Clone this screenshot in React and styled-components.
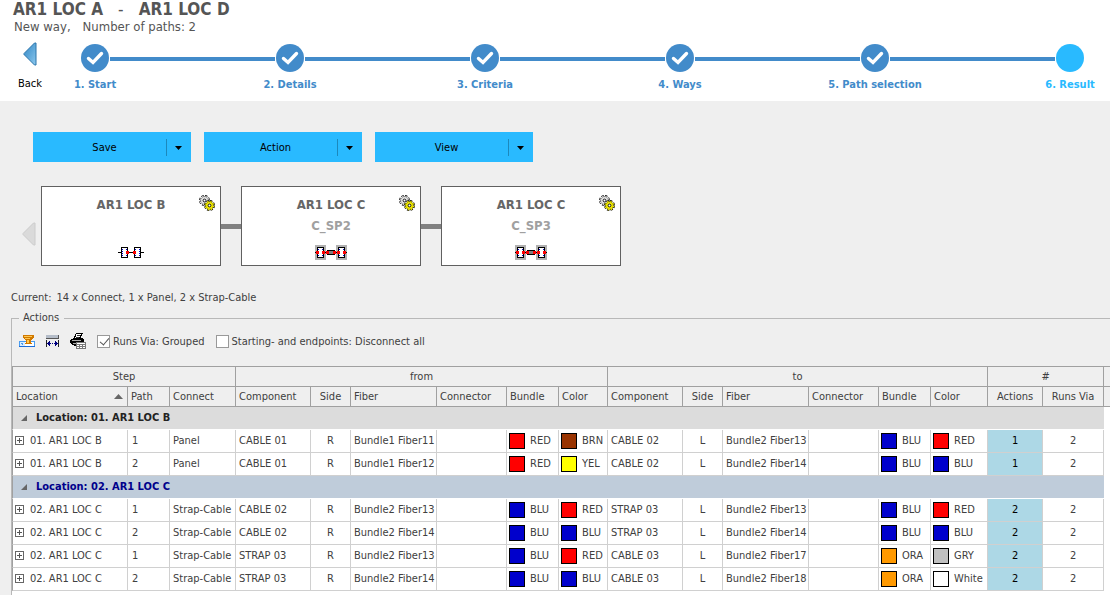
import {useState} from "react";
import styled, {createGlobalStyle} from "styled-components";

const COLOR = {
  BLUE: "#428bca",
  CYAN: "#29baff",
  PAGE: "#efefef",
  TEXT: "#404040",
  GRID_DARK: "#a0a0a0",
  GRID_LIGHT: "#d0d0d0",
};

const SWATCH = {
  RED: "#ff0000",
  BRN: "#993300",
  YEL: "#ffff00",
  BLU: "#0000cc",
  ORA: "#ff9900",
  GRY: "#c0c0c0",
  White: "#ffffff",
};

const STEPS = ["1. Start", "2. Details", "3. Criteria", "4. Ways", "5. Path selection", "6. Result"];

const NODES = [
  {title: "AR1 LOC B"},
  {title: "AR1 LOC C", splice: "C_SP2"},
  {title: "AR1 LOC C", splice: "C_SP3"},
];

const COLUMN_WIDTHS = [116, 42, 66, 75, 40, 86, 70, 52, 49, 75, 40, 86, 70, 52, 57, 55, 61];

const END_COLUMNS = ["Component", "Side", "Fiber", "Connector", "Bundle", "Color"];

const GROUPS = [
  {
    name: "Location: 01. AR1 LOC B",
    rows: [
      ["01. AR1 LOC B", 1, "Panel", ["CABLE 01", "R", "Bundle1 Fiber11", "RED", "BRN"], ["CABLE 02", "L", "Bundle2 Fiber13", "BLU", "RED"], 1, 2],
      ["01. AR1 LOC B", 2, "Panel", ["CABLE 01", "R", "Bundle1 Fiber12", "RED", "YEL"], ["CABLE 02", "L", "Bundle2 Fiber14", "BLU", "BLU"], 1, 2],
    ],
  },
  {
    name: "Location: 02. AR1 LOC C",
    selected: true,
    rows: [
      ["02. AR1 LOC C", 1, "Strap-Cable", ["CABLE 02", "R", "Bundle2 Fiber13", "BLU", "RED"], ["STRAP 03", "L", "Bundle2 Fiber13", "BLU", "RED"], 2, 2],
      ["02. AR1 LOC C", 2, "Strap-Cable", ["CABLE 02", "R", "Bundle2 Fiber14", "BLU", "BLU"], ["STRAP 03", "L", "Bundle2 Fiber14", "BLU", "BLU"], 2, 2],
      ["02. AR1 LOC C", 1, "Strap-Cable", ["STRAP 03", "R", "Bundle2 Fiber13", "BLU", "RED"], ["CABLE 03", "L", "Bundle2 Fiber17", "ORA", "GRY"], 2, 2],
      ["02. AR1 LOC C", 2, "Strap-Cable", ["STRAP 03", "R", "Bundle2 Fiber14", "BLU", "BLU"], ["CABLE 03", "L", "Bundle2 Fiber18", "ORA", "White"], 2, 2],
    ],
  },
];

const CheckIcon = () => (
  <svg width="28" height="28" viewBox="0 0 28 28" aria-hidden="true">
    <path d="M7.500 14.500l4.500 4 8.500-9" fill="none" stroke="#fff" strokeWidth="3.4" strokeLinecap="round" />
  </svg>
);

const BackIcon = () => (
  <svg width="14" height="24" viewBox="0 0 14 24" aria-hidden="true">
    <defs>
      <linearGradient id="back" x1="0" y1="0" x2="1" y2="1">
        <stop offset="0" stopColor="#2f86c4" />
        <stop offset="1" stopColor="#8cc8ee" />
      </linearGradient>
    </defs>
    <path d="M11.500 1h1.500v22h-1.500L1 12.500v-1z" fill="url(#back)" stroke="#2b74ab" strokeLinejoin="round" />
  </svg>
);

const ScrollIcon = () => (
  <svg width="14" height="24" viewBox="0 0 14 24" aria-hidden="true">
    <path d="M11.500 1h1.500v22h-1.500L1 12.500v-1z" fill="#dadada" stroke="#cccccc" strokeLinejoin="round" />
  </svg>
);

const CaretIcon = () => (
  <svg width="7" height="4" viewBox="0 0 7 4" aria-hidden="true">
    <path d="M0 0h7L3.500 4z" fill="#000" />
  </svg>
);

const Gear = ({x, y, fill}) => (
  <g transform={`translate(${x} ${y})`}>
    <circle r="4.2" fill="none" stroke="#000" strokeWidth="2.6" strokeDasharray="2.1 1.2" />
    <circle r="3.900" fill={fill} stroke="#000" strokeWidth="0.6" strokeDasharray="1.2 1" />
    <circle r="4.2" fill="none" stroke={fill} strokeWidth="1.6" strokeDasharray="1.1 2.2" strokeDashoffset="-0.5" />
    <circle r="1.4" fill="#fff" stroke="#000" strokeWidth="0.9" />
  </g>
);

const GearsIcon = () => (
  <svg width="16" height="16" viewBox="0 0 16 16" aria-hidden="true">
    <Gear x={5.5} y={5.5} fill="#e0e0e0" />
    <Gear x={10.5} y={10.5} fill="#f0e800" />
  </svg>
);

const Port = ({x, y}) => (
  <g>
    <rect x={x} y={y} width="7" height="11" fill="#000" />
    <rect x={x + 1} y={y + 1} width="5" height="9" fill="#fff" />
    {[2, 4, 6, 8].map((dy) => (
      <path key={dy} d={`M${x + 1} ${y + dy}h1v1h-1zM${x + 5} ${y + dy}h1v1h-1z`} fill="#0000cc" />
    ))}
  </g>
);

const PanelIcon = () => (
  <svg width="26" height="15" viewBox="0 0 26 15" shapeRendering="crispEdges" aria-hidden="true">
    <path d="M0 7h3v1H0zM10 7h6v1h-6zM23 7h3v1h-3z" fill="#000" />
    <Port x={3} y={2} />
    <Port x={16} y={2} />
    <path d="M8 6h3v3H8zM15 6h3v3h-3z" fill="#f00" />
  </svg>
);

const StrapIcon = () => (
  <svg width="32" height="15" viewBox="0 0 32 15" shapeRendering="crispEdges" aria-hidden="true">
    <path d="M0 0h11v15H0zM21 0h11v15H21z" fill="#b0b0b0" />
    <path d="M0 7h32v1H0zM12 5h8v5h-8z" fill="#000" />
    <path d="M13 6h6v3h-6z" fill="#808080" />
    <Port x={2} y={2} />
    <Port x={23} y={2} />
    <path d="M1 6h3v3H1zM7 6h3v3H7zM11 6h3v3h-3zM18 6h3v3h-3zM22 6h3v3h-3zM28 6h3v3h-3z" fill="#f00" />
  </svg>
);

const FilterIcon = () => (
  <svg width="16" height="16" viewBox="0 0 16 16" shapeRendering="crispEdges" aria-hidden="true">
    <path d="M0 7h16v6H0z" fill="#4a9cf0" />
    <path d="M1 8h5v4H1z" fill="#d8ecff" />
    <path d="M6 8h9v4H6z" fill="#fff" />
    <path d="M2 9h2v1H2zM3 10h1v1H3z" fill="#4a9cf0" />
    <path d="M0 12h16v1H0z" fill="#1c6cd8" />
    <path d="M4 1h11v3h-1v1h-1v1h-1v3h1v1H6V9h1V6H6V5H5V4H4z" fill="#d07800" />
    <path d="M5 2h8v1H5zM6 4h5v1H6zM8 6h2v3H8z" fill="#ffc850" />
  </svg>
);

const WidthIcon = () => (
  <svg width="13" height="16" viewBox="0 0 13 16" shapeRendering="crispEdges" aria-hidden="true">
    <path d="M0 1h13v4H0z" fill="#555" />
    <path d="M0 1h12v3H0z" fill="#b4bcc8" />
    <path d="M0 6h1v7H0zM12 6h1v7h-1z" fill="#222" />
    <path d="M1 9h1V8h1V7h1v2h1v1H4v2H3v-1H2v-1H1zM6 9h1v1H6zM12 9h-1V8h-1V7H9v2H8v1h1v2h1v-1h1v-1h1z" fill="#000080" />
  </svg>
);

const PrintIcon = () => (
  <svg width="16" height="17" viewBox="0 0 16 17" shapeRendering="crispEdges" aria-hidden="true">
    <path d="M6 0h7v1h-1v2h-1v2h2v1h1v5h-1v1h-1v1H4v-1H2v-1H1V10H0V7h1V6h2V5h1V3h1V1h1z" fill="#000" />
    <path d="M6 1h5v1h-1v2H9v1H5V4h1z" fill="#fff" />
    <path d="M7 2h3v1H7zM6 4h3v1H6z" fill="#333" />
    <path d="M2 7h9v1H2zM3 10h4v1H3z" fill="#aaa" />
    <path d="M6 9h10v7H6z" fill="#777" />
    <path d="M7 10h8v1H7zM7 12h2v1H7zM10 12h2v1h-2zM13 12h2v1h-2zM7 14h2v1H7zM10 14h2v1h-2zM13 14h2v1h-2z" fill="#fff" />
  </svg>
);

const SortIcon = () => (
  <svg width="9" height="5" viewBox="0 0 9 5" aria-hidden="true">
    <path d="M0 5h9L4.500 0z" fill="#666" />
  </svg>
);

const GroupIcon = () => (
  <svg width="6" height="6" viewBox="0 0 6 6" aria-hidden="true">
    <path d="M6 0v6H0z" fill="#666" />
  </svg>
);

const PlusIcon = () => (
  <svg width="9" height="10" viewBox="0 0 9 10" shapeRendering="crispEdges" aria-hidden="true">
    <path d="M0 0h9v9H0z" fill="#666" />
    <path d="M1 1h7v7H1z" fill="#fff" />
    <path d="M2 4h5v1H2zM4 2h1v5H4z" fill="#555" />
  </svg>
);

const SplitButton = ({label}) => (
  <StyledSplit>
    <StyledSplitMain type="button">{label}</StyledSplitMain>
    <StyledSplitCaret type="button" aria-label={`${label} options`}><CaretIcon /></StyledSplitCaret>
  </StyledSplit>
);

const Check = ({label, defaultChecked}) => {
  const [checked, setChecked] = useState(Boolean(defaultChecked));

  return (
    <StyledCheckLabel>
      <StyledCheckbox type="checkbox" checked={checked} onChange={() => setChecked(!checked)} />
      {label}
    </StyledCheckLabel>
  );
};

const ColorCell = ({code}) => (
  <StyledCell>
    <StyledColor><StyledSwatch $color={SWATCH[code]} />{code}</StyledColor>
  </StyledCell>
);

const EndCells = ({end: [component, side, fiber, bundle, color]}) => (
  <>
    <StyledCell>{component}</StyledCell>
    <StyledCell $center>{side}</StyledCell>
    <StyledCell>{fiber}</StyledCell>
    <StyledCell />
    <ColorCell code={bundle} />
    <ColorCell code={color} />
  </>
);

const Group = ({name, selected, rows}) => {
  const [isOpen, setOpen] = useState(true);

  return (
    <tbody>
      <tr>
        <StyledGroupCell colSpan={17} $selected={selected}>
          <StyledGroupButton type="button" aria-expanded={isOpen} onClick={() => setOpen(!isOpen)}>
            <GroupIcon />{name}
          </StyledGroupButton>
        </StyledGroupCell>
        <td />
      </tr>
      {isOpen && rows.map(([location, path, connect, from, to, actions, runs], index) => (
        <tr key={index}>
          <StyledCell $first>
            <StyledLocation>
              <StyledIconButton type="button" aria-label="Expand row"><PlusIcon /></StyledIconButton>
              {location}
            </StyledLocation>
          </StyledCell>
          <StyledCell $indent>{path}</StyledCell>
          <StyledCell>{connect}</StyledCell>
          <EndCells end={from} />
          <EndCells end={to} />
          <StyledCell $center $highlight>{actions}</StyledCell>
          <StyledCell $center>{runs}</StyledCell>
          <td />
        </tr>
      ))}
    </tbody>
  );
};

const ActionsTable = () => (
  <StyledTable>
    <colgroup>
      {COLUMN_WIDTHS.map((width, index) => <StyledCol key={index} $width={width} />)}
      <col />
    </colgroup>
    <thead>
      <tr>
        <StyledHead $top $center colSpan={3}>Step</StyledHead>
        <StyledHead $top $center colSpan={6}>from</StyledHead>
        <StyledHead $top $center colSpan={6}>to</StyledHead>
        <StyledHead $top $center colSpan={2}>#</StyledHead>
        <StyledHead $top $last />
      </tr>
      <tr>
        <StyledHead aria-sort="ascending">
          <StyledSorted>Location<SortIcon /></StyledSorted>
        </StyledHead>
        <StyledHead>Path</StyledHead>
        <StyledHead>Connect</StyledHead>
        {["from", "to"].map((end) => END_COLUMNS.map((column) => (
          <StyledHead key={end + column} $center={column === "Side"}>{column}</StyledHead>
        )))}
        <StyledHead $center>Actions</StyledHead>
        <StyledHead $center>Runs Via</StyledHead>
        <StyledHead $last />
      </tr>
    </thead>
    {GROUPS.map((group) => <Group key={group.name} {...group} />)}
  </StyledTable>
);

const App = () => (
  <StyledPage>
    <GlobalStyle />
    <StyledHeader>
      <StyledTitle><span>AR1 LOC A</span><StyledDash>-</StyledDash><span>AR1 LOC D</span></StyledTitle>
      <StyledSubtitle><span>New way,</span><span>Number of paths: 2</span></StyledSubtitle>
      <StyledWizard>
        <StyledBack type="button"><BackIcon />Back</StyledBack>
        <StyledSteps>
          {STEPS.map((step, index) => {
            const current = index === STEPS.length - 1;
            return (
              <StyledStep key={step} $last={current} aria-current={current ? "step" : undefined}>
                <StyledStepMark $current={current}>
                  <StyledCircle>{!current && <CheckIcon />}</StyledCircle>
                  {step}
                </StyledStepMark>
                {!current && <StyledStepLine />}
              </StyledStep>
            );
          })}
        </StyledSteps>
      </StyledWizard>
    </StyledHeader>
    <StyledButtons>
      <SplitButton label="Save" />
      <SplitButton label="Action" />
      <SplitButton label="View" />
    </StyledButtons>
    <StyledPath>
      <StyledScroll type="button" aria-label="Scroll left" disabled><ScrollIcon /></StyledScroll>
      <StyledNodes>
        {NODES.map(({title, splice}, index) => (
          <StyledNode key={index}>
            <StyledNodeTitle>{title}</StyledNodeTitle>
            <StyledNodeSplice>{splice}</StyledNodeSplice>
            {splice ? <StrapIcon /> : <PanelIcon />}
            <StyledGears><GearsIcon /></StyledGears>
          </StyledNode>
        ))}
      </StyledNodes>
    </StyledPath>
    <StyledSummary><span>Current:</span><span>14 x Connect, 1 x Panel, 2 x Strap-Cable</span></StyledSummary>
    <StyledActions>
      <StyledLegend>Actions</StyledLegend>
      <StyledTools>
        <StyledIconButton type="button" aria-label="Filter"><FilterIcon /></StyledIconButton>
        <StyledIconButton type="button" aria-label="Fit columns"><WidthIcon /></StyledIconButton>
        <StyledIconButton type="button" aria-label="Print"><PrintIcon /></StyledIconButton>
        <StyledChecks>
          <Check label="Runs Via: Grouped" defaultChecked />
          <Check label="Starting- and endpoints: Disconnect all" />
        </StyledChecks>
      </StyledTools>
      <StyledTableArea><ActionsTable /></StyledTableArea>
    </StyledActions>
  </StyledPage>
);

const GlobalStyle = createGlobalStyle`
  * {
    box-sizing: border-box;
  }
  body {
    margin: 0;
    background: ${COLOR.PAGE};
    color: ${COLOR.TEXT};
    font-family: "DejaVu Sans Condensed", "DejaVu Sans", sans-serif;
    font-size: 11px;
    line-height: 14px;
  }
  button {
    padding: 0;
    border: 0;
    background: none;
    color: inherit;
    font: inherit;
  }
  svg {
    display: block;
    flex: none;
  }
`;

const StyledPage = styled.div`
  display: flex;
  flex-direction: column;
  min-height: 100vh;
`;

const StyledHeader = styled.header`
  height: 101px;
  background: #fff;
`;

const StyledTitle = styled.h1`
  display: flex;
  gap: 15px;
  margin: 0;
  padding-left: 13px;
  font-size: 17px;
  line-height: 18px;
  color: #555;
`;

const StyledDash = styled.span`
  font-weight: normal;
`;

const StyledSubtitle = styled.div`
  display: flex;
  gap: 12px;
  padding-left: 14px;
  font-size: 13px;
  line-height: 18px;
  color: #555;
`;

const StyledWizard = styled.div`
  display: flex;
  align-items: flex-start;
  gap: 22px;
  padding: 6px 26px 0 0;
`;

const StyledBack = styled.button`
  display: flex;
  flex-direction: column;
  align-items: center;
  gap: 11px;
  width: 59px;
  padding-left: 1px;
  color: #000;
`;

const StyledSteps = styled.ol`
  display: flex;
  flex: 1;
  margin: 0;
  padding: 2px 0 0;
  list-style: none;
`;

const StyledStep = styled.li`
  display: flex;
  flex: ${({$last}) => ($last ? "none" : "1")};
`;

const StyledStepMark = styled.div`
  display: flex;
  flex-direction: column;
  align-items: center;
  gap: 6px;
  width: 28px;
  font-weight: bold;
  white-space: nowrap;
  color: ${({$current}) => ($current ? COLOR.CYAN : COLOR.BLUE)};
`;

const StyledCircle = styled.span`
  width: 28px;
  height: 28px;
  border-radius: 50%;
  background: currentColor;
`;

const StyledStepLine = styled.span`
  flex: 1;
  height: 4px;
  margin: 13px 1px 0;
  background: ${COLOR.BLUE};
`;

const StyledButtons = styled.div`
  display: flex;
  gap: 13px;
  padding: 31px 33px 0;
`;

const StyledSplit = styled.div`
  display: flex;
  align-items: center;
  width: 158px;
  height: 30px;
  background: ${COLOR.CYAN};
  color: #000;
`;

const StyledSplitMain = styled.button`
  flex: 1;
  align-self: stretch;
  padding: 2px 0 0 10px;
`;

const StyledSplitCaret = styled.button`
  display: flex;
  align-items: center;
  justify-content: center;
  width: 25px;
  height: 17px;
  padding: 1px 2px 0 0;
  border-left: 1px solid #1c88bc;
`;

const StyledPath = styled.div`
  display: flex;
  align-items: center;
  gap: 5px;
  padding: 24px 22px 0;
`;

const StyledNodes = styled.div`
  display: flex;
  gap: 20px;
`;

const StyledNode = styled.section`
  position: relative;
  display: flex;
  flex-direction: column;
  align-items: center;
  width: 180px;
  height: 80px;
  padding-top: 7px;
  border: 1px solid #606060;
  background: #fff;

  & + &::before {
    content: "";
    position: absolute;
    top: 37px;
    right: 100%;
    width: 20px;
    height: 5px;
    margin-right: 1px;
    background: #808080;
  }
`;

const StyledNodeTitle = styled.h2`
  margin: 0;
  font-size: 13px;
  line-height: 21px;
  color: #666;
`;

const StyledNodeSplice = styled.div`
  height: 30px;
  font-size: 13px;
  font-weight: bold;
  line-height: 21px;
  color: #a0a0a0;
`;

const StyledGears = styled.span`
  position: absolute;
  top: 8px;
  right: 5px;
`;

const StyledIconButton = styled.button`
  display: flex;
`;

const StyledScroll = styled.button`
  padding-top: 15px;
`;

const StyledSummary = styled.p`
  display: flex;
  gap: 5px;
  margin: 0;
  padding: 25px 11px 6px;
`;

const StyledActions = styled.fieldset`
  flex: 1;
  min-width: 0;
  margin: 0 0 0 11px;
  padding: 0;
  border: 0 solid #b8b8b8;
  border-width: 1px 0 0 1px;
`;

const StyledLegend = styled.legend`
  margin-left: 7px;
  padding: 0 5px 0 4px;
`;

const StyledTools = styled.div`
  display: flex;
  align-items: center;
  gap: 11px;
  height: 41px;
  padding: 0 0 8px 7px;
`;

const StyledChecks = styled.div`
  display: flex;
  gap: 11px;
`;

const StyledCheckLabel = styled.label`
  display: flex;
  align-items: center;
  gap: 3px;
`;

const StyledCheckbox = styled.input`
  appearance: none;
  width: 13px;
  height: 13px;
  margin: 0;
  border: 1px solid #999;
  background: #fff;

  &:checked::before {
    content: "";
    display: block;
    width: 4px;
    height: 8px;
    margin: 0 0 0 4px;
    border: solid #555;
    border-width: 0 1px 1px 0;
    transform: rotate(40deg);
  }
`;

const StyledTableArea = styled.div`
  padding-bottom: 4px;
  background: #fff;
`;

const StyledTable = styled.table`
  width: 100%;
  table-layout: fixed;
  border-spacing: 0;

  td:first-child,
  th:first-child {
    border-left: 1px solid ${COLOR.GRID_DARK};
  }
`;

const StyledCol = styled.col`
  width: ${({$width}) => $width}px;
`;

const StyledHead = styled.th`
  height: ${({$top}) => ($top ? 21 : 20)}px;
  padding: 0 3px;
  border: 0 solid ${COLOR.GRID_DARK};
  border-width: ${({$top, $last}) => `${$top ? 1 : 0}px ${$last ? 0 : 1}px 1px 0`};
  background: ${COLOR.PAGE};
  font-weight: normal;
  text-align: ${({$center}) => ($center ? "center" : "left")};
  white-space: nowrap;
`;

const StyledSorted = styled.div`
  display: flex;
  align-items: center;
  justify-content: space-between;
  padding-right: 1px;
`;

const StyledCell = styled.td`
  height: 23px;
  padding: 0 ${({$center}) => ($center ? 3 : 0)}px 0 ${({$first, $indent}) => ($first ? 2 : $indent ? 4 : 3)}px;
  border: 0 solid ${COLOR.GRID_LIGHT};
  border-width: 0 1px 1px 0;
  background: ${({$highlight}) => ($highlight ? "#add8e6" : "#fff")};
  color: ${({$highlight}) => ($highlight ? "#000" : "inherit")};
  text-align: ${({$center}) => ($center ? "center" : "left")};
  white-space: nowrap;
`;

const StyledLocation = styled.div`
  display: flex;
  align-items: center;
  gap: 6px;
`;

const StyledColor = styled.div`
  display: flex;
  align-items: center;
  gap: 5px;
  margin-left: -1px;
`;

const StyledSwatch = styled.span`
  width: 16px;
  height: 16px;
  border: 1px solid #000;
  background: ${({$color}) => $color};
`;

const StyledGroupCell = styled.td`
  height: 23px;
  padding: 0 0 0 8px;
  border-bottom: 1px solid #fff;
  background: ${({$selected}) => ($selected ? "#bfccda" : "#dcdcdc")};
  background-clip: padding-box;
  color: ${({$selected}) => ($selected ? "#00008b" : "#222")};
`;

const StyledGroupButton = styled.button`
  display: flex;
  align-items: center;
  gap: 9px;
  font-weight: bold;
`;

export default App;
